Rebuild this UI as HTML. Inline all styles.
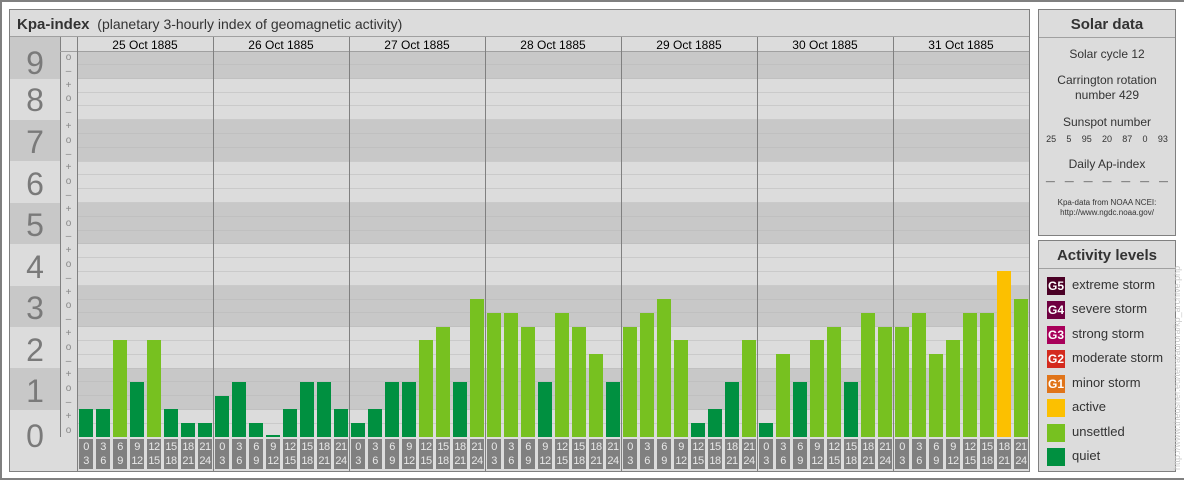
<!DOCTYPE html><html><head><meta charset="utf-8"><style>
*{margin:0;padding:0;box-sizing:border-box}
body{width:1184px;height:480px;background:#fff;font-family:"Liberation Sans",Arial,sans-serif;position:relative;overflow:hidden}
.abs{position:absolute}
#frame{left:0;top:0;width:1184px;height:480px;border:2px solid #808080;border-right:none}
#main{left:9px;top:9px;width:1021px;height:463px;border:1px solid #808080;background:#dcdcdc}
#hdr{left:10px;top:10px;width:1019px;height:27px;border-bottom:1px solid #a0a0a0;font-size:14px;color:#333;padding:6px 0 0 7px}
#hdr b{font-size:15px}
.band{position:absolute;left:10px;width:1019px}
.d{background:#c8c8c8}.l{background:#dcdcdc}
.big{position:absolute;left:10px;width:50px;text-align:center;font-size:32px;color:#7a7a7a;line-height:1}
#lines{left:77px;top:51px;width:952px;height:387px;background:repeating-linear-gradient(to bottom,transparent 0,transparent 13.3px,#b8b8b8 13.3px,#b8b8b8 13.8px)}
.vl{position:absolute;top:37px;width:1px;height:434px;background:#808080}
.dt{position:absolute;top:38px;width:136px;text-align:center;font-size:12px;color:#000}
#sub{left:60px;top:51px;width:17px;font-size:10px;color:#888;text-align:center;line-height:13.8px;background:#dcdcdc}
#plot{left:0;top:0;width:1030px;height:437px}
#plot i{position:absolute;bottom:0;width:14px}
.g{background:#009040}.u{background:#77c120}.y{background:#fcc000}
#bot{left:60px;top:437px;width:969px;height:34px;background:#dcdcdc}
.lb{position:absolute;top:439px;width:14px;height:30px;background:#808080;color:#e8e8e8;font-size:11px;line-height:14px;text-align:center;padding-top:1px;letter-spacing:-0.5px}
.box{position:absolute;left:1038px;width:138px;border:1px solid #808080;background:#dcdcdc;text-align:center;color:#333}
.box h3{height:28px;border-bottom:1px solid #a0a0a0;font-size:15px;padding-top:6px}
.sw{position:absolute;left:8px;width:18px;height:18px;color:#fff;font-size:12px;font-weight:bold;line-height:18px;text-align:center}
.lt{position:absolute;left:33px;font-size:13px;color:#333}
</style></head><body>
<div class="abs" id="frame"></div>
<div class="abs" id="main"></div>
<div class="abs" id="hdr"><b>Kpa-index</b>&nbsp; (planetary 3-hourly index of geomagnetic activity)</div>
<div class="band l" style="top:37px;height:14px"></div>
<div class="band d" style="top:51px;height:27.6px"></div>
<div class="band l" style="top:78.6px;height:41.4px"></div>
<div class="band d" style="top:120px;height:41.4px"></div>
<div class="band l" style="top:161.4px;height:41.4px"></div>
<div class="band d" style="top:202.8px;height:41.4px"></div>
<div class="band l" style="top:244.2px;height:41.4px"></div>
<div class="band d" style="top:285.6px;height:41.4px"></div>
<div class="band l" style="top:327px;height:41.4px"></div>
<div class="band d" style="top:368.4px;height:41.4px"></div>
<div class="band l" style="top:409.8px;height:28px"></div>
<div class="abs" style="left:10px;top:37px;width:50px;height:14px;background:#c8c8c8"></div>
<div class="big" style="top:47px">9</div>
<div class="big" style="top:84px">8</div>
<div class="big" style="top:126px">7</div>
<div class="big" style="top:168px">6</div>
<div class="big" style="top:209px">5</div>
<div class="big" style="top:251px">4</div>
<div class="big" style="top:292px">3</div>
<div class="big" style="top:334px">2</div>
<div class="big" style="top:375px">1</div>
<div class="big" style="top:420px">0</div>
<div class="abs" id="lines"></div>
<div class="abs" id="sub">o<br>–<br>+<br>o<br>–<br>+<br>o<br>–<br>+<br>o<br>–<br>+<br>o<br>–<br>+<br>o<br>–<br>+<br>o<br>–<br>+<br>o<br>–<br>+<br>o<br>–<br>+<br>o</div>
<div class="abs" style="left:60px;top:37px;width:1px;height:434px;background:#808080"></div>
<div class="abs" style="left:60px;top:51px;width:969px;height:1px;background:#a0a0a0"></div>
<div class="abs" id="bot"></div>
<div class="vl" style="left:77px"></div><div class="vl" style="left:213px"></div><div class="vl" style="left:349px"></div><div class="vl" style="left:485px"></div><div class="vl" style="left:621px"></div><div class="vl" style="left:757px"></div><div class="vl" style="left:893px"></div>
<div class="dt" style="left:77px">25 Oct 1885</div><div class="dt" style="left:213px">26 Oct 1885</div><div class="dt" style="left:349px">27 Oct 1885</div><div class="dt" style="left:485px">28 Oct 1885</div><div class="dt" style="left:621px">29 Oct 1885</div><div class="dt" style="left:757px">30 Oct 1885</div><div class="dt" style="left:893px">31 Oct 1885</div>
<div class="abs" id="plot">
<i class="g" style="left:79px;height:28px"></i><i class="g" style="left:96px;height:28px"></i><i class="u" style="left:113px;height:97px"></i><i class="g" style="left:130px;height:55px"></i><i class="u" style="left:147px;height:97px"></i><i class="g" style="left:164px;height:28px"></i><i class="g" style="left:181px;height:14px"></i><i class="g" style="left:198px;height:14px"></i>
<i class="g" style="left:215px;height:41px"></i><i class="g" style="left:232px;height:55px"></i><i class="g" style="left:249px;height:14px"></i><i class="g" style="left:266px;height:2px"></i><i class="g" style="left:283px;height:28px"></i><i class="g" style="left:300px;height:55px"></i><i class="g" style="left:317px;height:55px"></i><i class="g" style="left:334px;height:28px"></i>
<i class="g" style="left:351px;height:14px"></i><i class="g" style="left:368px;height:28px"></i><i class="g" style="left:385px;height:55px"></i><i class="g" style="left:402px;height:55px"></i><i class="u" style="left:419px;height:97px"></i><i class="u" style="left:436px;height:110px"></i><i class="g" style="left:453px;height:55px"></i><i class="u" style="left:470px;height:138px"></i>
<i class="u" style="left:487px;height:124px"></i><i class="u" style="left:504px;height:124px"></i><i class="u" style="left:521px;height:110px"></i><i class="g" style="left:538px;height:55px"></i><i class="u" style="left:555px;height:124px"></i><i class="u" style="left:572px;height:110px"></i><i class="u" style="left:589px;height:83px"></i><i class="g" style="left:606px;height:55px"></i>
<i class="u" style="left:623px;height:110px"></i><i class="u" style="left:640px;height:124px"></i><i class="u" style="left:657px;height:138px"></i><i class="u" style="left:674px;height:97px"></i><i class="g" style="left:691px;height:14px"></i><i class="g" style="left:708px;height:28px"></i><i class="g" style="left:725px;height:55px"></i><i class="u" style="left:742px;height:97px"></i>
<i class="g" style="left:759px;height:14px"></i><i class="u" style="left:776px;height:83px"></i><i class="g" style="left:793px;height:55px"></i><i class="u" style="left:810px;height:97px"></i><i class="u" style="left:827px;height:110px"></i><i class="g" style="left:844px;height:55px"></i><i class="u" style="left:861px;height:124px"></i><i class="u" style="left:878px;height:110px"></i>
<i class="u" style="left:895px;height:110px"></i><i class="u" style="left:912px;height:124px"></i><i class="u" style="left:929px;height:83px"></i><i class="u" style="left:946px;height:97px"></i><i class="u" style="left:963px;height:124px"></i><i class="u" style="left:980px;height:124px"></i><i class="y" style="left:997px;height:166px"></i><i class="u" style="left:1014px;height:138px"></i>
</div>
<div class="lb" style="left:79px">0<br>3</div><div class="lb" style="left:96px">3<br>6</div><div class="lb" style="left:113px">6<br>9</div><div class="lb" style="left:130px">9<br>12</div><div class="lb" style="left:147px">12<br>15</div><div class="lb" style="left:164px">15<br>18</div><div class="lb" style="left:181px">18<br>21</div><div class="lb" style="left:198px">21<br>24</div>
<div class="lb" style="left:215px">0<br>3</div><div class="lb" style="left:232px">3<br>6</div><div class="lb" style="left:249px">6<br>9</div><div class="lb" style="left:266px">9<br>12</div><div class="lb" style="left:283px">12<br>15</div><div class="lb" style="left:300px">15<br>18</div><div class="lb" style="left:317px">18<br>21</div><div class="lb" style="left:334px">21<br>24</div>
<div class="lb" style="left:351px">0<br>3</div><div class="lb" style="left:368px">3<br>6</div><div class="lb" style="left:385px">6<br>9</div><div class="lb" style="left:402px">9<br>12</div><div class="lb" style="left:419px">12<br>15</div><div class="lb" style="left:436px">15<br>18</div><div class="lb" style="left:453px">18<br>21</div><div class="lb" style="left:470px">21<br>24</div>
<div class="lb" style="left:487px">0<br>3</div><div class="lb" style="left:504px">3<br>6</div><div class="lb" style="left:521px">6<br>9</div><div class="lb" style="left:538px">9<br>12</div><div class="lb" style="left:555px">12<br>15</div><div class="lb" style="left:572px">15<br>18</div><div class="lb" style="left:589px">18<br>21</div><div class="lb" style="left:606px">21<br>24</div>
<div class="lb" style="left:623px">0<br>3</div><div class="lb" style="left:640px">3<br>6</div><div class="lb" style="left:657px">6<br>9</div><div class="lb" style="left:674px">9<br>12</div><div class="lb" style="left:691px">12<br>15</div><div class="lb" style="left:708px">15<br>18</div><div class="lb" style="left:725px">18<br>21</div><div class="lb" style="left:742px">21<br>24</div>
<div class="lb" style="left:759px">0<br>3</div><div class="lb" style="left:776px">3<br>6</div><div class="lb" style="left:793px">6<br>9</div><div class="lb" style="left:810px">9<br>12</div><div class="lb" style="left:827px">12<br>15</div><div class="lb" style="left:844px">15<br>18</div><div class="lb" style="left:861px">18<br>21</div><div class="lb" style="left:878px">21<br>24</div>
<div class="lb" style="left:895px">0<br>3</div><div class="lb" style="left:912px">3<br>6</div><div class="lb" style="left:929px">6<br>9</div><div class="lb" style="left:946px">9<br>12</div><div class="lb" style="left:963px">12<br>15</div><div class="lb" style="left:980px">15<br>18</div><div class="lb" style="left:997px">18<br>21</div><div class="lb" style="left:1014px">21<br>24</div>

<div class="box" style="top:9px;height:227px">
<h3>Solar data</h3>
<div style="font-size:12px;margin-top:9px">Solar cycle 12</div>
<div style="font-size:12px;margin-top:12px;line-height:15px">Carrington rotation<br>number 429</div>
<div style="font-size:12px;margin-top:12px">Sunspot number</div>
<div style="font-size:9px;margin-top:5px;display:flex;justify-content:space-around;padding:0 2px"><span>25</span><span>5</span><span>95</span><span>20</span><span>87</span><span>0</span><span>93</span></div>
<div style="font-size:12px;margin-top:13px">Daily Ap-index</div>
<div style="font-size:9px;margin-top:5px;display:flex;justify-content:space-around;padding:0 2px"><span>—</span><span>—</span><span>—</span><span>—</span><span>—</span><span>—</span><span>—</span></div>
<div style="font-size:8px;margin-top:12px;line-height:10px">Kpa-data from NOAA NCEI:<br>http://www.ngdc.noaa.gov/</div>
</div>
<div class="box" style="top:240px;height:232px">
<h3>Activity levels</h3>
<div class="sw" style="top:36px;background:#4a0025">G5</div><div class="lt" style="top:36px">extreme storm</div>
<div class="sw" style="top:60px;background:#6e0040">G4</div><div class="lt" style="top:60px">severe storm</div>
<div class="sw" style="top:85px;background:#a8005a">G3</div><div class="lt" style="top:85px">strong storm</div>
<div class="sw" style="top:109px;background:#d42a1e">G2</div><div class="lt" style="top:109px">moderate storm</div>
<div class="sw" style="top:134px;background:#e0741a">G1</div><div class="lt" style="top:134px">minor storm</div>
<div class="sw" style="top:158px;background:#fcc000"></div><div class="lt" style="top:158px">active</div>
<div class="sw" style="top:183px;background:#77c120"></div><div class="lt" style="top:183px">unsettled</div>
<div class="sw" style="top:207px;background:#009040"></div><div class="lt" style="top:207px">quiet</div>
</div>
<div class="abs" style="left:1172px;top:470px;width:230px;transform:rotate(-90deg);transform-origin:0 0;font-size:9px;color:#c8c8c8;white-space:nowrap">http://www.theusner.eu/terra/aurora/kp_archive.php</div>
</body></html>
